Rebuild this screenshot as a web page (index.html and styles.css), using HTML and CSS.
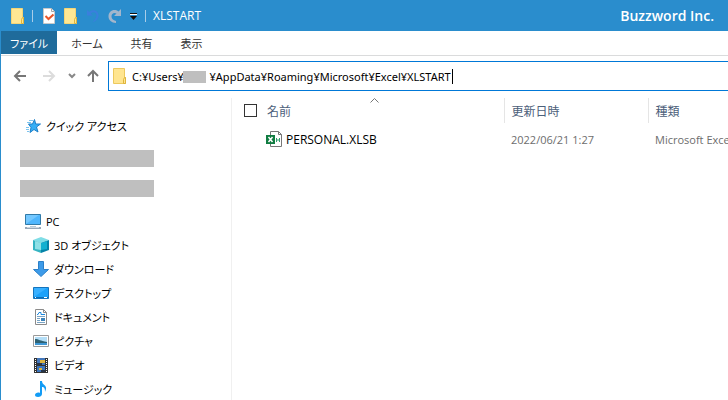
FILE: index.html
```html
<!DOCTYPE html>
<html lang="ja">
  <head>
    <meta charset="UTF-8" />
    <meta name="viewport" content="width=device-width, initial-scale=1.0" />
    <title>XLSTART</title>
    <link rel="stylesheet" href="styles.css">
  </head>

  <body>
    <div id="window">
      <!-- Title bar -->
      <header class="title-bar">
        <svg class="folder" viewBox="0 0 14 16"><path d="M0.500 0.500h11v9h1v6h-12z" fill="#ffe793" stroke="#f5d576"/><path d="M10.500 15.500v-4l1-2h1v6z" fill="#ffe590" stroke="#dfb53c"/></svg>
        <span class="separator"></span>
        <div class="quick-access">
          <button aria-label="プロパティ">
            <svg width="14" height="16" viewBox="0 0 14 16"><path d="M1.500 0.500h8l3 3v12h-11z" fill="#fff" stroke="#c9c9c9"/><path d="M9.500 0.500v3h3" fill="none" stroke="#a8a8a8"/><path d="M3.500 8l3 3l5-4.500" fill="none" stroke="#e8562a" stroke-width="2"/></svg>
          </button>
          <button aria-label="新しいフォルダー">
            <svg class="folder" viewBox="0 0 14 16"><path d="M0.500 0.500h11v9h1v6h-12z" fill="#ffe793" stroke="#f5d576"/><path d="M10.500 15.500v-4l1-2h1v6z" fill="#ffe590" stroke="#dfb53c"/></svg>
          </button>
          <button aria-label="元に戻す">
            <svg width="14" height="16" viewBox="0 0 14 16"><path d="M1 2v5.500h6L4.500 5.500C8 3 11 5 10.500 8c0 2-2 4-4 6.500c4-2 6-4 6-7C12.500 3 7 0.500 3.200 4z" fill="#3a7fdd"/></svg>
          </button>
          <button aria-label="やり直し">
            <svg width="14" height="16" viewBox="0 0 14 16"><path d="M13 1v7H6l2.500-2.500C6 4 3.500 5.500 3.500 8.500c0 2 1.500 4 4.500 4.500v2C3.500 15 0.500 12 0.500 8.500C0.500 3 6 0 10.500 3.500z" fill="#a3b6cc"/></svg>
          </button>
          <button class="more" aria-label="カスタマイズ">
            <svg width="8" height="8" viewBox="0 0 8 8"><path d="M0 1h7v1H0z" fill="#fff"/><path d="M0 0h7v1H0zM0 3h7L3.500 7z" fill="#111"/></svg>
          </button>
        </div>
        <span class="separator"></span>
        <h1>XLSTART</h1>
        <span class="brand">Buzzword Inc.</span>
      </header>

      <!-- Ribbon tabs -->
      <nav class="tabs">
        <button class="tab active">ファイル</button>
        <button class="tab">ホーム</button>
        <button class="tab">共有</button>
        <button class="tab">表示</button>
      </nav>

      <!-- Navigation buttons and address -->
      <div class="toolbar">
        <div class="nav-buttons">
          <button aria-label="戻る"><svg width="14" height="12" viewBox="0 0 14 12"><path d="M13 6H2M7 1L2 6l5 5" fill="none" stroke="#777" stroke-width="2"/></svg></button>
          <button class="forward" aria-label="進む"><svg width="14" height="12" viewBox="0 0 14 12"><path d="M0 6h11M6 1l5 5l-5 5" fill="none" stroke="#dcdcdc" stroke-width="2"/></svg></button>
          <button aria-label="履歴"><svg width="8" height="6" viewBox="0 0 8 6"><path d="M1 1l3 3l3-3" fill="none" stroke="#888" stroke-width="2"/></svg></button>
          <button aria-label="上へ"><svg width="12" height="14" viewBox="0 0 12 14"><path d="M6 13V2M1 7l5-5l5 5" fill="none" stroke="#777" stroke-width="2"/></svg></button>
        </div>
        <div class="address">
          <svg class="folder" viewBox="0 0 14 16"><path d="M0.500 0.500h11v9h1v6h-12z" fill="#ffe590" stroke="#edc95e"/><path d="M10.500 15.500v-4l1-2h1v6z" fill="#ffe590" stroke="#dfb53c"/></svg>
          <div class="path">
            <input id="path-input" type="text" aria-label="アドレス" value="C:¥Users¥         ¥AppData¥Roaming¥Microsoft¥Excel¥XLSTART" />
            <span class="user-mask"></span>
            <span class="caret"></span>
          </div>
        </div>
      </div>

      <div class="content">
        <!-- Navigation pane -->
        <aside class="sidebar">
          <a class="item" href="#"><svg width="16" height="16" viewBox="0 0 16 16"><path d="M9.500 1.500l1.200 4.500h4.800l-4 3l1.500 5l-4-2.500l-4 3l1-5l-2.500-3.500h4z" fill="#35aef5" stroke="#1c7fc8"/><path d="M4 2.500h4M2 4.500h4M1 9.500h3M1 11.500h3M2 13.500h2" stroke="#7cc4ee"/></svg>クイック アクセス</a>
          <div class="masks"><span></span><span></span></div>
          <a class="item" href="#"><svg width="16" height="16" viewBox="0 0 16 16"><path d="M0.500 1.500h15v10h-15z" fill="#4fb6fd" stroke="#317aa8"/><path d="M1 11V2h13z" fill="#74c8ff"/><path d="M5 13h6v1H5z" fill="#b8cad6"/><path d="M0 14h16v2H0z" fill="#98a8b8"/><path d="M2 14h12v1H2z" fill="#cfd9e2"/></svg>PC</a>
          <a class="item child" href="#"><svg width="16" height="16" viewBox="0 0 16 16"><path d="M0 3l8-3l8 3l-8 3z" fill="#7fdde6"/><path d="M0 3l8 3v10l-8-3z" fill="#35b4c2"/><path d="M16 3L8 6v10l8-3z" fill="#0583a8"/><path d="M2 4l6 2v7l-6-1z" fill="#8fe0e6"/><path d="M8 6l6-2v8l-6 1z" fill="#12b0d0"/></svg>3D オブジェクト</a>
          <a class="item child" href="#"><svg width="16" height="16" viewBox="0 0 16 16"><path d="M5.500 0.500h5v8h5L8 15.500L0.500 8.500h5z" fill="#3d9be9" stroke="#2c80c8"/></svg>ダウンロード</a>
          <a class="item child" href="#"><svg width="16" height="16" viewBox="0 0 16 16"><path d="M0.500 2.500h15v11h-15z" fill="#1ba1fa" stroke="#1474bd"/><path d="M1 12V3h13z" fill="#38b0ff"/><path d="M1 12h14v1H1z" fill="#0b6db5"/><path d="M2 12h1v1H2zM11 12h3v1h-3z" fill="#fff"/></svg>デスクトップ</a>
          <a class="item child" href="#"><svg width="16" height="16" viewBox="0 0 16 16"><path d="M2.500 0.500h8l3 3v12h-11z" fill="#fff" stroke="#8b8b8b"/><path d="M10.500 0.500v3h3" fill="none" stroke="#8b8b8b"/><path d="M4 7.500h8M4 9.500h3M4 11.500h3M4 13.500h8" stroke="#7aa4c4"/><path d="M4 5.500h1l1-2h2v2h4" fill="none" stroke="#1e8ae0"/><path d="M8 9h4v3H8z" fill="#3c83ba"/></svg>ドキュメント</a>
          <a class="item child" href="#"><svg width="16" height="16" viewBox="0 0 16 16"><path d="M0.500 2.500h15v11h-15z" fill="#fff" stroke="#9a9a9a"/><path d="M2 4h12v8H2z" fill="#b4def7"/><path d="M2 6c4 0 5 2 12 3v1H2z" fill="#2f6274"/><path d="M2 10h12v2H2z" fill="#3f98d6"/></svg>ピクチャ</a>
          <a class="item child" href="#"><svg width="16" height="16" viewBox="0 0 16 16"><path d="M1 1h14v15H1z" fill="#333"/><path d="M4 1h8v7H4z" fill="#4477ba"/><path d="M4 9h8v6H4z" fill="#3c75bd"/><path d="M7 3h5v3H7zM6 11h3v2H6z" fill="#ddb43e"/><path d="M4 6h5v2H4zM8 13h4v2H8z" fill="#263448"/><path d="M2.500 2v13M13.500 2v13" stroke="#fff" stroke-dasharray="1 1"/></svg>ビデオ</a>
          <a class="item child" href="#"><svg width="16" height="16" viewBox="0 0 16 16"><path d="M7 0h2c0 4 5 4 4 8l-1 3c0-4-1-5-3-5v7c0 2-2 3-4 3s-3-1-3-2c0-2 3-3 5-2z" fill="#139cf5"/></svg>ミュージック</a>
        </aside>

        <!-- File list -->
        <main class="files">
          <table>
            <thead>
              <tr>
                <th class="check"><input type="checkbox" aria-label="すべて選択" /></th>
                <th class="name">名前<svg class="sort" width="9" height="5" viewBox="0 0 9 5"><path d="M0.500 4.500l4-4l4 4" fill="none" stroke="#777"/></svg></th>
                <th class="date">更新日時</th>
                <th>種類</th>
              </tr>
            </thead>
            <tbody>
              <tr>
                <td></td>
                <td class="file-name"><svg width="16" height="16" viewBox="0 0 16 16"><path d="M4.500 0.500h8l3 3v12h-11z" fill="#fff" stroke="#777"/><path d="M12.500 0.500v3h3" fill="none" stroke="#777"/><path d="M0 4h9v9H0z" fill="#107c41"/><path d="M2.500 6l4 5M6.500 6l-4 5" stroke="#fff" stroke-width="1.500"/><path d="M10.500 7v4M10.500 9h3M13.500 7v4" stroke="#33a06c" fill="none"/></svg>PERSONAL.XLSB</td>
                <td>2022/06/21 1:27</td>
                <td>Microsoft Excel</td>
              </tr>
            </tbody>
          </table>
        </main>
      </div>
    </div>
  </body>
</html>
```
FILE: styles.css
```css
:root {
  --blue: #2a8dcd;
  --blue-dark: #1f6b9b;
  --focus: #0078d7;
}

* {
  box-sizing: border-box;
}

body,
html {
  margin: 0;
  padding: 0;
  height: 100%;
}

body,
button,
input {
  font-family: "Open Sans", "Noto Sans CJK JP", sans-serif;
  font-size: 12px;
  font-feature-settings: "palt";
}

button {
  border: none;
  padding: 0;
  background: none;
  cursor: pointer;
}

svg {
  display: block;
  flex: none;
}

#window {
  display: flex;
  flex-direction: column;
  height: 100vh;
  border-left: 1px solid var(--blue);
  background: #fff;
  overflow: hidden;
}

/* Title bar */
.title-bar {
  display: flex;
  align-items: center;
  flex: none;
  gap: 7px;
  height: 31px;
  padding: 0 14px 0 10px;
  background: var(--blue);
  color: #fff;
}

.title-bar h1 {
  margin: 0;
  font-size: 12px;
  font-weight: normal;
}

.folder {
  width: 14px;
  height: 16px;
}

.separator {
  width: 1px;
  height: 12px;
  background: #a9cde8;
}

.quick-access {
  display: flex;
  align-items: center;
  gap: 8px;
  padding-left: 2px;
}

.more {
  padding-top: 3px;
}

.brand {
  margin-left: auto;
  font-size: 14px;
  font-weight: 600;
}

/* Ribbon tabs */
.tabs {
  display: flex;
  flex: none;
  height: 25px;
  padding-bottom: 1px;
  border-bottom: 1px solid #dadbdc;
}

.tab {
  padding: 0 14px;
  font-size: 11px;
  color: #333;
}

.tab.active {
  padding: 0 9px;
  background: var(--blue-dark);
  color: #fff;
}

/* Toolbar */
.toolbar {
  display: flex;
  flex: none;
  padding-top: 5px;
}

.nav-buttons {
  display: flex;
  align-items: center;
  gap: 11px;
  width: 107px;
  padding-left: 12px;
}

.forward {
  margin-left: 5px;
}

.address {
  display: flex;
  align-items: center;
  flex: 1;
  height: 30px;
  padding-left: 4px;
  border: 1px solid var(--focus);
  border-right: none;
}

.path {
  position: relative;
  flex: 1;
  margin-left: 5px;
}

.path input {
  display: block;
  width: 100%;
  padding: 0;
  border: none;
  outline: none;
  font-family: "Noto Sans", sans-serif;
  font-size: 11px;
  color: #000;
}

.user-mask {
  position: absolute;
  top: 2px;
  left: 51px;
  width: 23px;
  height: 12px;
  background: #bfbfbf;
}

.caret {
  position: absolute;
  top: 0;
  left: 320px;
  width: 1px;
  height: 15px;
  background: #000;
}

/* Navigation pane */
.content {
  display: flex;
  flex: 1;
  min-height: 0;
  padding-top: 7px;
}

.sidebar {
  flex: none;
  width: 231px;
  padding: 16px 0 0 24px;
  border-right: 1px solid #f0f0f0;
  overflow: hidden;
}

.item {
  display: flex;
  align-items: center;
  gap: 5px;
  height: 24px;
  font-size: 11px;
  color: #000;
  text-decoration: none;
}

.item.child {
  padding-left: 8px;
}

.masks {
  display: flex;
  flex-direction: column;
  gap: 13px;
  width: 134px;
  margin: 12px 0 12px -5px;
}

.masks span {
  height: 17px;
  background: #bfbfbf;
}

/* File list */
.files {
  flex: 1;
  min-width: 0;
  overflow: hidden;
}

table {
  width: 100%;
  table-layout: fixed;
  border-collapse: collapse;
}

th {
  position: relative;
  height: 25px;
  padding: 0 0 0 7px;
  color: #4c607a;
  font-weight: normal;
  text-align: left;
}

th.check {
  width: 28px;
  padding-left: 12px;
}

th.name {
  width: 244px;
  border-right: 1px solid #e5e5e5;
}

th.date {
  width: 144px;
  border-right: 1px solid #e5e5e5;
}

th input {
  display: block;
  appearance: none;
  width: 13px;
  height: 13px;
  margin: 0;
  border: 1px solid #333;
  background: #fff;
}

.sort {
  position: absolute;
  top: 0;
  left: 110px;
}

td {
  height: 32px;
  padding: 0 0 0 7px;
  font-size: 11px;
  color: #6d6d6d;
  white-space: nowrap;
}

.file-name {
  display: flex;
  align-items: center;
  gap: 4px;
  padding-left: 6px;
  font-size: 12px;
  color: #000;
}
```
